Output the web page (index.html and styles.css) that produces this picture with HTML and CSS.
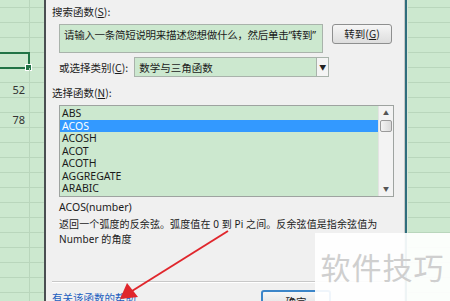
FILE: index.html
```html
<html>
<head>
    <meta charset="utf-8">
    <link rel="stylesheet" href="styles.css">
</head>
<body>
    <div class="screen">
        <!--Hoja de cálculo a la izquierda-->
        <div class="sheet sheet-left">
            <div class="row first"><div class="cell"></div></div>
            <div class="row"><div class="cell"></div></div>
            <div class="row"><div class="cell"></div></div>
            <div class="row"><div class="cell"></div></div>
            <div class="row"><div class="cell selected"><span class="handle"></span></div></div>
            <div class="row"><div class="cell"></div></div>
            <div class="row"><div class="cell">52</div></div>
            <div class="row"><div class="cell"></div></div>
            <div class="row"><div class="cell">78</div></div>
            <div class="row"><div class="cell"></div></div>
            <div class="row"><div class="cell"></div></div>
            <div class="row"><div class="cell"></div></div>
            <div class="row"><div class="cell"></div></div>
            <div class="row"><div class="cell"></div></div>
            <div class="row"><div class="cell"></div></div>
            <div class="row"><div class="cell"></div></div>
            <div class="row"><div class="cell"></div></div>
            <div class="row"><div class="cell"></div></div>
            <div class="row"><div class="cell"></div></div>
            <div class="row"><div class="cell"></div></div>
            <div class="row"><div class="cell"></div></div>
        </div>

        <!--Cuadro de diálogo insertar función-->
        <div class="dialog">
            <div class="label top">搜索函数(<u>S</u>):</div>
            <div class="search-row">
                <div class="search-box">请输入一条简短说明来描述您想做什么，然后单击“转到”</div>
                <div class="btn go">转到(<u>G</u>)</div>
            </div>
            <div class="cat-row">
                <span class="label">或选择类别(<u>C</u>):</span>
                <div class="select">
                    <span>数学与三角函数</span>
                    <span class="drop">&#9660;</span>
                </div>
            </div>
            <div class="label pick">选择函数(<u>N</u>):</div>
            <div class="listbox">
                <div class="items">
                    <div class="item">ABS</div>
                    <div class="item active">ACOS</div>
                    <div class="item">ACOSH</div>
                    <div class="item">ACOT</div>
                    <div class="item">ACOTH</div>
                    <div class="item">AGGREGATE</div>
                    <div class="item">ARABIC</div>
                </div>
                <div class="scrollbar">
                    <span class="arrow">&#9650;</span>
                    <span class="thumb"></span>
                    <span class="track"></span>
                    <span class="arrow">&#9660;</span>
                </div>
            </div>
            <div class="syntax">ACOS(number)</div>
            <div class="desc">返回一个弧度的反余弦。弧度值在 0 到 Pi 之间。反余弦值是指余弦值为<br>Number 的角度</div>
            <div class="spacer"></div>
            <div class="sep"></div>
            <div class="bottom">
                <span class="link">有关该函数的帮助</span>
                <div class="btn ok">确定</div>
            </div>
        </div>

        <!--Hoja de cálculo a la derecha-->
        <div class="sheet sheet-right"></div>

        <!--Flecha roja y marca de agua encima-->
        <svg class="arrow-mark" width="450" height="301" viewBox="0 0 450 301">
            <line x1="228" y1="231" x2="132" y2="291" stroke="#e0262c" stroke-width="2"/>
            <polygon points="120,299 127,283 138,297" fill="#e0262c"/>
        </svg>
        <div class="watermark">软件技巧</div>
    </div>
</body>
</html>
```

FILE: styles.css
```css
/*Estilos de la hoja y del cuadro de diálogo*/
html, body {
    margin: 0;
    padding: 0;
    overflow: hidden;
}
body {
    font-family: "Noto Sans", "Noto Sans CJK SC", sans-serif;
    font-size: 10.5px;
    color: #1b1b1b;
}
.screen {
    position: relative;
    display: flex;
    width: 450px;
    height: 301px;
    overflow: hidden;
}
.sheet {
    background-color: #cce8cf;
}
.sheet-left {
    width: 44px;
    border-right: 2px solid #4a4f52;
    display: flex;
    flex-direction: column;
}
.row {
    height: 14px;
    flex-shrink: 0;
    border-bottom: 1px solid #b9d6bc;
}
.row.first {
    height: 7px;
}
.cell {
    position: relative;
    width: 30px;
    height: 100%;
    border-right: 1px solid #b9d6bc;
    box-sizing: border-box;
    text-align: right;
    padding-right: 4px;
    line-height: 14px;
    font-size: 11px;
    color: #333;
}
.cell.selected {
    border: 2px solid #217346;
    border-left: none;
    height: 17px;
    margin-top: -1px;
}
.handle {
    position: absolute;
    right: -4px;
    bottom: -4px;
    width: 5px;
    height: 5px;
    background: #217346;
    border: 1px solid #fff;
}
.sheet-right {
    flex: 1;
    border-left: 2px solid #2f6e7c;
    box-shadow: inset 1px 0 0 #d8e6da;
    background-image: repeating-linear-gradient(to bottom, transparent 0, transparent 7px, #b9d6bc 7px, #b9d6bc 8px, transparent 8px, transparent 15px);
    background-position: 0 0;
}
.dialog {
    width: 352px;
    background-color: #f0f0f0;
    border-right: 1px solid #c9c9c9;
    display: flex;
    flex-direction: column;
    padding: 0 0 0 6px;
}
.label {
    font-family: "Noto Sans CJK SC", sans-serif;
}
.label.top {
    margin-top: 4px;
    height: 15px;
    line-height: 15px;
}
.search-row {
    display: flex;
    margin-top: 5px;
    padding-left: 7px;
}
.search-box {
    width: 264px;
    height: 29px;
    box-sizing: border-box;
    border: 1px solid #a9b3ab;
    background: #cce8cf;
    padding: 2px 4px;
    font-family: "Noto Sans", "Noto Sans CJK SC", sans-serif;
    letter-spacing: -0.3px;
    white-space: nowrap;
    overflow: hidden;
}
.btn {
    box-sizing: border-box;
    border: 1px solid #8e8f8f;
    border-radius: 3px;
    background: linear-gradient(#f6f6f6, #dddddd);
    text-align: center;
    font-family: "Noto Sans CJK SC", sans-serif;
}
.go {
    width: 60px;
    height: 20px;
    line-height: 18px;
    margin-left: 9px;
}
.cat-row {
    display: flex;
    align-items: center;
    margin-top: 4px;
    padding-left: 7px;
}
.select {
    display: flex;
    justify-content: space-between;
    align-items: center;
    width: 195px;
    height: 20px;
    box-sizing: border-box;
    margin-left: 6px;
    border: 1px solid #a9b3ab;
    background: #cce8cf;
    padding-left: 4px;
    font-family: "Noto Sans CJK SC", sans-serif;
}
.drop {
    width: 11px;
    height: 18px;
    border-left: 1px solid #a9b3ab;
    background: #f4f4f4;
    font-size: 7px;
    line-height: 18px;
    text-align: center;
    color: #222;
}
.label.pick {
    margin-top: 8px;
    height: 15px;
    line-height: 15px;
}
.listbox {
    display: flex;
    margin-top: 5px;
    margin-left: 7px;
    width: 335px;
    height: 92px;
    box-sizing: border-box;
    border: 1px solid #9ea3a0;
    background: #cce8cf;
}
.items {
    flex: 1;
    padding-top: 1px;
}
.item {
    height: 12.5px;
    line-height: 12.5px;
    padding-left: 2px;
}
.item.active {
    background: #3399ff;
    color: #fff;
}
.scrollbar {
    width: 14px;
    display: flex;
    flex-direction: column;
    align-items: center;
    background: #f3f3f3;
    border-left: 1px solid #e3e3e3;
}
.arrow {
    font-size: 6px;
    height: 14px;
    line-height: 14px;
    color: #555;
}
.thumb {
    width: 12px;
    height: 12px;
    box-sizing: border-box;
    border: 1px solid #9a9a9a;
    border-radius: 2px;
    background: linear-gradient(to right, #f4f4f4, #dadada);
}
.track {
    flex: 1;
}
.syntax {
    margin-top: 3px;
    margin-left: 7px;
    height: 15px;
    line-height: 15px;
}
.desc {
    margin-left: 7px;
    margin-top: 2px;
    line-height: 15px;
    font-family: "Noto Sans", "Noto Sans CJK SC", sans-serif;
    font-size: 10px;
    letter-spacing: 0.1px;
}
.spacer {
    flex: 1;
}
.sep {
    height: 1px;
    background: #c8c8c8;
    margin-right: 6px;
    border-bottom: 1px solid #fff;
}
.bottom {
    display: flex;
    height: 17px;
    padding-top: 7px;
    margin-bottom: -6px;
}
.link {
    font-family: "Noto Sans CJK SC", sans-serif;
    color: #1e5fbf;
    text-decoration: underline;
}
.ok {
    margin-left: 125px;
    width: 70px;
    height: 22px;
    border: 2px solid #3c86c9;
    line-height: 20px;
}
.arrow-mark {
    position: absolute;
    left: 0;
    top: 0;
}
.watermark {
    position: absolute;
    left: 315px;
    top: 233px;
    width: 135px;
    height: 68px;
    background: rgba(255, 255, 255, 0.92);
    color: #cfcfcf;
    font-family: "Noto Sans CJK SC", sans-serif;
    font-size: 30px;
    line-height: 66px;
    text-align: center;
    letter-spacing: 1px;
}
```
